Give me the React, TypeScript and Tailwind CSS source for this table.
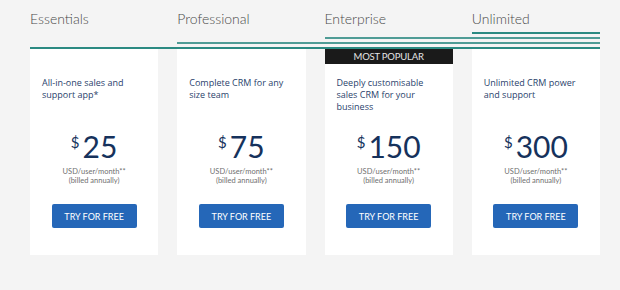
import React from 'react';

interface Plan {
  name: string;
  lines: string[];
  price: string;
  popular?: boolean;
}

const plans: Plan[] = [
  { name: 'Essentials', lines: ['All-in-one sales and', 'support app*'], price: '25' },
  { name: 'Professional', lines: ['Complete CRM for any', 'size team'], price: '75' },
  {
    name: 'Enterprise',
    lines: ['Deeply customisable', 'sales CRM for your', 'business'],
    price: '150',
    popular: true
  },
  { name: 'Unlimited', lines: ['Unlimited CRM power', 'and support'], price: '300' }
];

const PlanCard: React.FC<{ plan: Plan }> = ({ plan }) => (
  <div className="flex flex-col bg-white">
    {plan.popular ? (
      <div className="flex h-[15px] items-center justify-center bg-[#1a1a1a] text-[9.5px] leading-none text-[#e4e4e4] tracking-[-0.2px]">
        MOST POPULAR
      </div>
    ) : null}
    <div className={`px-[12px] ${plan.popular ? 'pt-[13px]' : 'pt-[28px]'}`}>
      <p className="h-[36px] font-['Open_Sans',sans-serif] text-[9px] leading-[12px] text-[#2a3f6c]">
        {plan.lines.map((l, i) => (
          <span key={i} className="block whitespace-nowrap">
            {l}
          </span>
        ))}
      </p>
    </div>
    <div className="mt-[18px] flex h-[30px] items-start justify-center text-[#16325c]">
      <span className="mr-[3px] mt-[4px] text-[15px] leading-none">$</span>
      <span className="text-[30px] leading-[30px]">{plan.price}</span>
    </div>
    <div className="mt-[6px] text-center text-[7.5px] leading-[9px] text-[#707070]">
      <div>USD/user/month**</div>
      <div>(billed annually)</div>
    </div>
    <div className="mt-[19px] flex justify-center pb-[27px]">
      <button className="flex h-[24px] w-[85px] items-center justify-center rounded-[2px] bg-[#2567b8] text-[9px] leading-none text-white">
        TRY FOR FREE
      </button>
    </div>
  </div>
);

export default function App() {
  return (
    <div className="min-h-[290px] w-[620px] bg-[#f4f4f4] font-['Lato',sans-serif]">
      <div className="ml-[30px] w-[570px]">
        <div className="grid grid-cols-4 gap-x-[19px] pt-[9px]">
          {plans.map((p) => (
            <div key={p.name} className="text-[14px] font-light leading-[20px] text-[#4a4a4a]">
              {p.name}
            </div>
          ))}
        </div>
        <div className="mt-[3px] grid grid-cols-4 gap-x-[19px] gap-y-[3px]">
          <div className="col-start-4 h-[2px] bg-[#2b8a82]" />
          <div className="col-span-2 col-start-3 h-[2px] bg-[#4f9c96]" />
          <div className="col-span-3 col-start-2 h-[2px] bg-[#4f9c96]" />
          <div className="col-span-4 col-start-1 h-[2px] bg-[#2b8a82]" />
        </div>
        <div className="grid grid-cols-4 gap-x-[19px]">
          {plans.map((p) => (
            <PlanCard key={p.name} plan={p} />
          ))}
        </div>
      </div>
    </div>
  );
}
